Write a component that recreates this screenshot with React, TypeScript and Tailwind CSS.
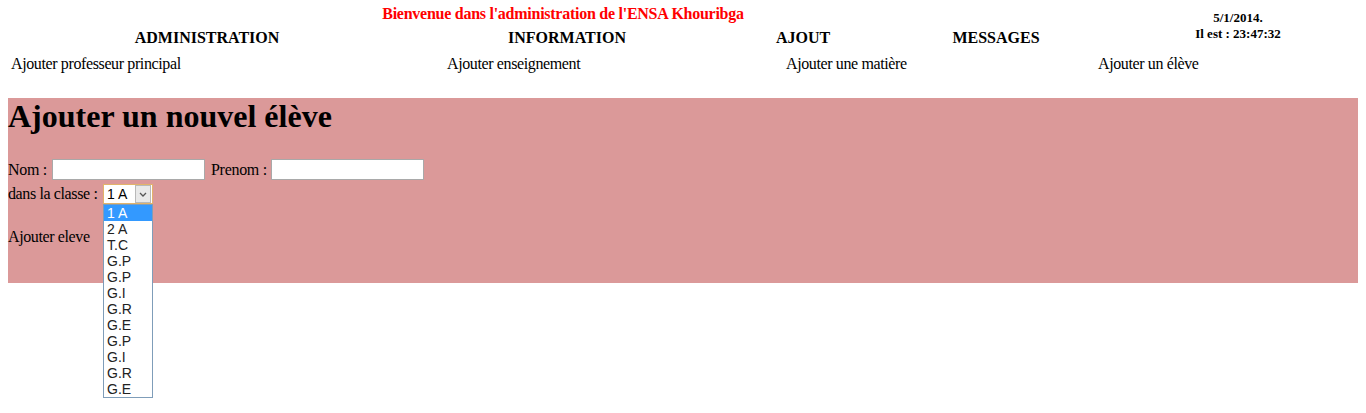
import React from "react";

const options = ["1 A", "2 A", "T.C", "G.P", "G.P", "G.I", "G.R", "G.E", "G.P", "G.I", "G.R", "G.E"];

export default function App() {
  return (
    <div className="min-h-[413px] bg-white px-2 text-black text-[16px]" style={{ fontFamily: '"Liberation Serif", "Times New Roman", serif' }}>
      {/* header */}
      <div className="flex">
        <div className="w-[1110px] shrink-0">
          <div className="mt-[5px] text-center font-bold text-[16px] leading-[18px] tracking-[-0.26px] text-[#f00]">
            Bienvenue dans l'administration de l'ENSA Khouribga
          </div>
          <div className="mt-[6px] flex font-bold leading-[18px]">
            <div className="w-[398px] text-center">ADMINISTRATION</div>
            <div className="w-[322px] text-center">INFORMATION</div>
            <div className="w-[150px] text-center">AJOUT</div>
            <div className="w-[236px] text-center">MESSAGES</div>
          </div>
        </div>
        <div className="flex-1 pt-[10px] text-center text-[13px] font-bold leading-[16px]">
          <div>5/1/2014.</div>
          <div>Il est : 23:47:32</div>
        </div>
      </div>
      <div className="mt-[8px] flex leading-[18px] tracking-[-0.38px]">
        <div className="w-[436px] pl-[3px]">Ajouter professeur principal</div>
        <div className="w-[339px] pl-[3px]">Ajouter enseignement</div>
        <div className="w-[312px] pl-[3px]">Ajouter une matière</div>
        <div className="flex-1 pl-[3px]">Ajouter un élève</div>
      </div>

      {/* pink box */}
      <div className="mt-[25px] bg-[#db9999] pb-[37px]">
        <h1 className="text-[32px] font-bold leading-[37px]">Ajouter un nouvel élève</h1>
        <div className="mt-[24px] flex h-[21px] items-center tracking-[-0.3px]">
          <span className="w-[44px] whitespace-pre">Nom : </span>
          <div className="h-[21px] w-[153px] border border-[#a9a9a9] bg-white" />
          <span className="w-[66px] whitespace-pre pl-[6px]">Prenom : </span>
          <div className="h-[21px] w-[153px] border border-[#a9a9a9] bg-white" />
        </div>
        <div className="mt-[4px] flex h-[20px] items-center">
          <span className="w-[95px] whitespace-pre tracking-[-0.38px]">dans la classe : </span>
          <div className="relative">
            <div className="flex h-[20px] w-[50px] items-center border border-[#e3b36a] bg-white" style={{ fontFamily: '"Liberation Sans", Arial, sans-serif' }}>
              <span className="flex-1 pl-[3px] text-[14px] leading-[16px]">1 A</span>
              <div className="mr-[1px] flex h-[18px] w-[16px] items-center justify-center border border-[#b9b9b9] bg-[#e9e9e9]">
                <svg width="8" height="5" viewBox="0 0 8 5">
                  <path d="M1 1 L4 4 L7 1" fill="none" stroke="#555" strokeWidth="1.3" />
                </svg>
              </div>
            </div>
            <div className="absolute left-0 top-[20px] z-10 w-[50px] border border-[#7f9db9] bg-white" style={{ fontFamily: '"Liberation Sans", Arial, sans-serif' }}>
              {options.map((o, i) => (
                <div key={i} className={`h-[16px] pl-[3px] text-[14px] leading-[16px] ${i === 0 ? "bg-[#3399ff] text-white" : "text-[#222]"}`}>
                  {o}
                </div>
              ))}
            </div>
          </div>
        </div>
        <div className="mt-[24px] leading-[18px] tracking-[-0.38px]">Ajouter eleve</div>
      </div>
    </div>
  );
}
